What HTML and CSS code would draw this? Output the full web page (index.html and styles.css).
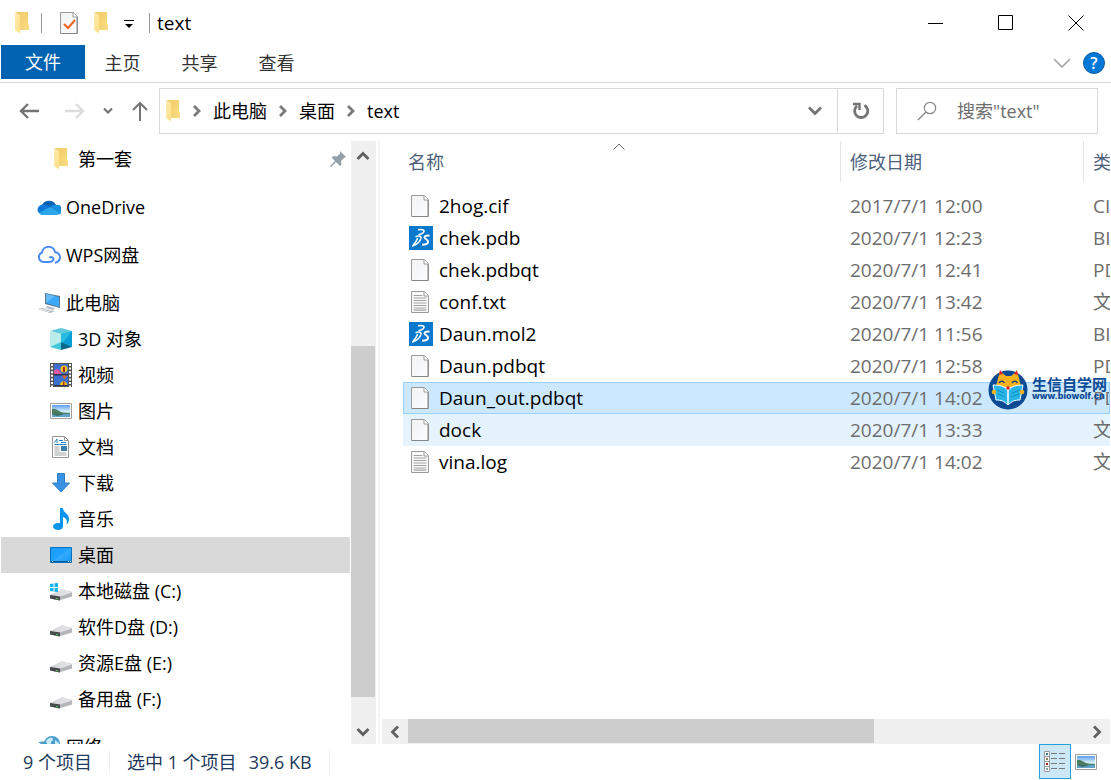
FILE: index.html
```html
<!DOCTYPE html>
<html lang="zh-CN">
<head>
    <meta charset="UTF-8">
    <meta name="viewport" content="width=device-width, initial-scale=1.0">
    <title>text</title>
    <link rel="stylesheet" href="styles.css">
</head>
<body>
    <!-- Shared icons -->
    <svg class="sprite" aria-hidden="true">
        <defs>
            <linearGradient id="folderFront" x1="0" y1="0" x2="1" y2="1">
                <stop offset="0" stop-color="#ffecb0"/>
                <stop offset="1" stop-color="#ffdf86"/>
            </linearGradient>
            <linearGradient id="folderBack" x1="0" y1="0" x2="1" y2="1">
                <stop offset="0" stop-color="#efc868"/>
                <stop offset="1" stop-color="#fbdc80"/>
            </linearGradient>
            <linearGradient id="sky" x1="0" y1="0" x2="0" y2="1">
                <stop offset="0" stop-color="#5b9bf5"/>
                <stop offset="0.5" stop-color="#cdeaf8"/>
                <stop offset="1" stop-color="#e4f3f7"/>
            </linearGradient>
            <linearGradient id="screen" x1="0" y1="0" x2="1" y2="1">
                <stop offset="0" stop-color="#1c9dfb"/>
                <stop offset="0.5" stop-color="#1fa2ff"/>
                <stop offset="0.5" stop-color="#35adff"/>
                <stop offset="1" stop-color="#1596f5"/>
            </linearGradient>
            <linearGradient id="diskTop" x1="0" y1="0" x2="1" y2="0">
                <stop offset="0" stop-color="#d2d3d5"/>
                <stop offset="1" stop-color="#e9e9eb"/>
            </linearGradient>
            <linearGradient id="paper" x1="0" y1="0" x2="1" y2="1">
                <stop offset="0" stop-color="#f1f3f4"/>
                <stop offset="1" stop-color="#fbfcfd"/>
            </linearGradient>
        </defs>
        <symbol id="folder" viewBox="0 0 16 22">
            <path d="M2 0H14V12l1 1v5H5L1 16z" fill="url(#folderBack)"/>
            <path d="M1 0l5 3v18.500L1 18z" fill="url(#folderFront)"/>
        </symbol>
        <symbol id="file" viewBox="0 0 18 22">
            <path d="M.5.500h13l4 4v17H.5z" fill="url(#paper)" stroke="#9a9a9a"/>
            <path d="M13 .5v4.500h4.500" fill="#fff" stroke="#9a9a9a"/>
            <path d="M17 5v16.500H1" fill="none" stroke="#868686"/>
        </symbol>
        <symbol id="textfile" viewBox="0 0 18 22">
            <path d="M.5.500h13l4 4v17H.5z" fill="#fafafa" stroke="#9a9a9a"/>
            <path d="M13 .5v4.500h4.500" fill="#fff" stroke="#9a9a9a"/>
            <path d="M2.500 4.500h9M2.500 7h13M2.500 9.500h13M2.500 12h13M2.500 14.500h13M2.500 17h13M2.500 19.200h13" stroke="#a2a2a2" stroke-width="1.200"/>
        </symbol>
        <symbol id="ds" viewBox="0 0 24 24">
            <path d="M0 0h24v24H0z" fill="#0a78cc"/>
            <g fill="none" stroke="#fff" stroke-width="1.500" stroke-linejoin="round">
                <path d="M9 3.800c3.500-.6 6.500-.2 6 1.500-.5 1.600-3 2.900-5.500 3.500"/>
                <path d="M6.500 10.800c3.500-1.200 6-.9 5.500 1.400-.6 3-4 6.500-8.300 7.800 1.800-2.300 3.800-4.500 5-8"/>
                <path d="M20.500 9.600c-3-.3-5.300.5-5 2 .3 1.400 4 2.200 3.700 4.300-.2 1.800-3.200 2.800-6.200 2.800" stroke-width="1.900"/>
            </g>
        </symbol>
        <symbol id="picture" viewBox="0 0 22 16">
            <path d="M.5.500h21v15H.5z" fill="#fff" stroke="#a0a0a0"/>
            <path d="M2 2h18v12H2z" fill="url(#sky)"/>
            <path d="M2 6c4-1 6 2 9 3s6 .5 9 1v1H2z" fill="#4b7d62"/>
            <path d="M2 11h18v3H2z" fill="#5fa1c9"/>
            <path d="M2 11c5-.5 9 0 12 .3L7 13z" fill="#3d6d62"/>
        </symbol>
        <symbol id="disk" viewBox="0 0 22 12">
            <path d="M0 6.500L12 .5 22 3v4.500L9 11.500 0 9.500z" fill="#b3b5b8"/>
            <path d="M0 6L12 0l10 3.500L10 7.500z" fill="url(#diskTop)"/>
            <path d="M0 6l10 1.500v4L0 9.500z" fill="#474b4c"/>
            <path d="M6 9l2 .3v1L6 10z" fill="#3fd154"/>
        </symbol>
        <symbol id="chev" viewBox="0 0 10 12">
            <path d="M2 1l5 5-5 5" fill="none" stroke="#7a7a7a" stroke-width="2.800"/>
        </symbol>
    </svg>

    <div class="window">
        <header class="titlebar">
            <svg class="folder"><use href="#folder"/></svg>
            <span class="divider"></span>
            <button class="quick" aria-label="属性">
                <svg width="18" height="22" viewBox="0 0 18 22"><use href="#file"/><path d="M4 12l4 4 7-8" fill="none" stroke="#f0641e" stroke-width="2"/></svg>
            </button>
            <button class="quick" aria-label="新建文件夹"><svg class="folder"><use href="#folder"/></svg></button>
            <button class="quick" aria-label="自定义快速访问工具栏">
                <svg width="10" height="10" viewBox="0 0 10 10"><path d="M0 2h10v1H0zM1 6h8l-4 4z"/></svg>
            </button>
            <span class="divider"></span>
            <h1>text</h1>
            <div class="controls">
                <button aria-label="最小化"><svg width="16" height="16"><path d="M0 8.500h15" stroke="#000"/></svg></button>
                <button aria-label="最大化"><svg width="16" height="16"><path d="M.5.500h14v14H.5z" fill="none" stroke="#000"/></svg></button>
                <button aria-label="关闭"><svg width="16" height="16"><path d="M.5.500l15 15M15.500.5l-15 15" stroke="#000"/></svg></button>
            </div>
        </header>

        <nav class="tabs" aria-label="功能区">
            <button class="tab tab-file">文件</button>
            <button class="tab">主页</button>
            <button class="tab">共享</button>
            <button class="tab">查看</button>
            <div class="tabs-right">
                <button aria-label="展开功能区"><svg width="18" height="10"><path d="M1 1l8 8 8-8" fill="none" stroke="#a3a3a3" stroke-width="1.600"/></svg></button>
                <button class="help" aria-label="帮助">?</button>
            </div>
        </nav>

        <div class="toolbar">
            <div class="history">
                <button aria-label="后退"><svg width="20" height="18"><path d="M20 9H2M9 2L2 9l7 7" fill="none" stroke="#757575" stroke-width="2.400"/></svg></button>
                <button aria-label="前进"><svg width="20" height="18"><path d="M0 9h18M11 2l7 7-7 7" fill="none" stroke="#dcdcdc" stroke-width="2.400"/></svg></button>
                <button aria-label="最近位置"><svg width="10" height="8"><path d="M1 1.500l4 4 4-4" fill="none" stroke="#757575" stroke-width="2.200"/></svg></button>
                <button aria-label="向上"><svg width="18" height="20"><path d="M9 20V2M2 9l7-7 7 7" fill="none" stroke="#757575" stroke-width="2"/></svg></button>
            </div>
            <div class="address">
                <svg class="folder"><use href="#folder"/></svg>
                <svg class="chev"><use href="#chev"/></svg>
                <button>此电脑</button>
                <svg class="chev"><use href="#chev"/></svg>
                <button>桌面</button>
                <svg class="chev"><use href="#chev"/></svg>
                <button>text</button>
                <button class="drop" aria-label="以前的位置"><svg width="14" height="10"><path d="M1 1.500l6 6 6-6" fill="none" stroke="#757575" stroke-width="2.800"/></svg></button>
                <button class="refresh" aria-label="刷新">
                    <svg width="18" height="18"><path d="M12.500 3.200A6.600 6.600 0 1 1 5 3.800" fill="none" stroke="#757575" stroke-width="2.800"/><path d="M1 2h6.500v6" fill="none" stroke="#757575" stroke-width="2.400"/></svg>
                </button>
            </div>
            <label class="search">
                <svg width="20" height="20"><circle cx="13" cy="7" r="5.700" fill="none" stroke="#8a8a8a" stroke-width="1.200"/><path d="M9 11l-8 8" stroke="#8a8a8a" stroke-width="1.400"/></svg>
                <input type="search" placeholder="搜索&quot;text&quot;" aria-label="搜索">
            </label>
        </div>

        <main>
            <nav class="tree" aria-label="导航窗格">
                <ul>
                    <li>
                        <a href="#" class="sub"><svg class="folder"><use href="#folder"/></svg>第一套
                            <svg class="pin" width="16" height="16"><path d="M10 0l6 6-2 1-3 3 .5 4-1.500 1-4-4-5 5-1-1 5-5-3-3 1-2 4 .5 3-3z" fill="#949fa8"/></svg>
                        </a>
                    </li>
                    <li class="group">
                        <a href="#">
                            <svg width="24" height="16"><path d="M5 6a8 8 0 0 1 14 0l-6 5z" fill="#0a62b8"/><path d="M1 13A5.500 5.500 0 0 1 5 5.500c3-.5 5 .5 8 3L5 16z" fill="#0f7ad6"/><path d="M13 8c2-2 4-2.500 6-2a5 5 0 0 1 3 9.500z" fill="#1590df"/><path d="M2 14l11-6 9.500 6c-.5 1.500-2 2-3 2H5c-1 0-2-.7-3-2z" fill="#29a7ea"/></svg>OneDrive
                        </a>
                    </li>
                    <li class="group">
                        <a href="#">
                            <svg width="24" height="18"><path d="M13 16H6a5 5 0 0 1-1-9.500A6.600 6.600 0 0 1 18 6c3 .5 5 3 5 5.500S20.500 16 18 17M13 16c2-.5 3.500-1 3.500-3s-3-2.500-4-1" fill="none" stroke="#4b8af5" stroke-width="2"/></svg>WPS网盘
                        </a>
                    </li>
                    <li class="group">
                        <a href="#">
                            <svg width="24" height="22"><path d="M8 1l15 3v12L8 12z" fill="#5b7486"/><path d="M9 2l13 3v10L9 11z" fill="#3aa9f7"/><path d="M9 2l9 2-9 7z" fill="#65bdf8"/><path d="M10 14l8 2-2 2-7-2z" fill="#b4bec7"/><path d="M1 17l5-1 12 3-5 2z" fill="#a9adb3"/><path d="M3 17l10 3M6 16.500l10 2.500" stroke="#eee"/></svg>此电脑
                        </a>
                    </li>
                    <li>
                        <a href="#" class="sub"><svg width="22" height="22"><path d="M0 3l11-3 11 3-11 3z" fill="#5fcadb"/><path d="M0 3l11 3v11L0 19z" fill="#b9ecea"/><path d="M22 3L11 6v11l11 2z" fill="#0b9fd8"/><path d="M11 6v11l11-14z" fill="#27bcdf"/><path d="M0 19l11-5v8z" fill="#44c9da"/><path d="M22 19l-11-5v8z" fill="#086a8b"/></svg>3D 对象</a>
                    </li>
                    <li>
                        <a href="#" class="sub"><svg width="22" height="24"><path d="M0 0h22v24H0z" fill="#555"/><path d="M4 1h14v22H4z" fill="#3b6fd0"/><path d="M4 7l4-1 4 5H4z" fill="#e05aa6"/><circle cx="14" cy="6" r="3.500" fill="#f3c518"/><path d="M13 4h2v5h-2z" fill="#b02b24"/><path d="M4 11h14v1.500H4zM4 22h14v1H4z" fill="#28324a"/><path d="M12 12.500h5l-2.500 4z" fill="#e0601c"/><path d="M10 22c0-5 7-5 7 0z" fill="#f3c518"/><path d="M13 18.500h1.500V22H13z" fill="#b02b24"/><path d="M2 1v23M20 1v23" stroke="#fff" stroke-width="2" stroke-dasharray="2 1.600"/></svg>视频</a>
                    </li>
                    <li><a href="#" class="sub"><svg width="22" height="16"><use href="#picture"/></svg>图片</a></li>
                    <li>
                        <a href="#" class="sub"><svg width="22" height="22"><path d="M2.500.500h12l4 4v17h-16z" fill="#fff" stroke="#969696"/><path d="M14.500.500v4h4" fill="none" stroke="#969696"/><path d="M4.500 6.500L7 3v4M9 4.500h4M11 6.500h5M4.500 8.500h12" stroke="#1d82c8" fill="none"/><path d="M4.500 11h5M4.500 13h5M4.500 15h5M4.500 17h12M4.500 19h12" stroke="#a5a5a5"/><path d="M11 10h6v5h-6z" fill="#3b7fa8"/></svg>文档</a>
                    </li>
                    <li>
                        <a href="#" class="sub"><svg width="22" height="20"><path d="M7.500.500h7V10h5L11 19l-8.500-9h5z" fill="#3b93e4" stroke="#2b7cc9"/></svg>下载</a>
                    </li>
                    <li>
                        <a href="#" class="sub"><svg width="22" height="22"><ellipse cx="8" cy="18.500" rx="5" ry="3.500" fill="#0b94ee"/><path d="M10 0h3c0 5 6 5 6 11 0 3-1 4-2.500 5.500 1-4 0-6-3.500-7.500v9.500h-3z" fill="#0b94ee"/></svg>音乐</a>
                    </li>
                    <li>
                        <a href="#" class="sub current"><svg width="22" height="16"><path d="M.5.500h21v15H.5z" fill="url(#screen)" stroke="#0871bd"/><path d="M1 14.500h20" stroke="#0b5f9f"/><path d="M2 14.500h1M18 14.500h1M20 14.500h1" stroke="#fff"/></svg>桌面</a>
                    </li>
                    <li>
                        <a href="#" class="sub"><svg class="disk"><use href="#disk" y="8" width="22" height="12"/><path d="M0 3l3.500-.5V6H0zM4.500 2.300L8 2v4H4.500zM0 7h3.500v3.500L0 10zM4.500 7H8v4l-3.500-.3z" fill="#12b5ef"/></svg>本地磁盘 (C:)</a>
                    </li>
                    <li><a href="#" class="sub"><svg class="disk"><use href="#disk" y="8" width="22" height="12"/></svg>软件D盘 (D:)</a></li>
                    <li><a href="#" class="sub"><svg class="disk"><use href="#disk" y="8" width="22" height="12"/></svg>资源E盘 (E:)</a></li>
                    <li><a href="#" class="sub"><svg class="disk"><use href="#disk" y="8" width="22" height="12"/></svg>备用盘 (F:)</a></li>
                    <li class="group">
                        <a href="#"><svg width="24" height="22"><path d="M1 6l9-1v7z" fill="#4e9cc4"/><circle cx="15" cy="8" r="8" fill="#4b9fce"/><path d="M9 5c3-4 6-4 7-2s-3 2-2 5-4 2-5-3zM18 4l4 3v4l-4-3z" fill="#cdebf5"/></svg>网络</a>
                    </li>
                </ul>
            </nav>
            <div class="scroll-y">
                <button aria-label="向上滚动"><svg width="14" height="10"><path d="M1.500 8L7 2.500 12.500 8" fill="none" stroke="#606060" stroke-width="2.800"/></svg></button>
                <span class="thumb"></span>
                <button aria-label="向下滚动"><svg width="14" height="10"><path d="M1.500 2L7 7.500 12.500 2" fill="none" stroke="#606060" stroke-width="2.800"/></svg></button>
            </div>

            <section class="content">
                <div class="list">
                    <table>
                        <colgroup><col class="col-name"><col class="col-date"><col></colgroup>
                        <thead>
                            <tr>
                                <th><span>名称</span><svg class="sort" width="12" height="7"><path d="M.5 6.500L6 1l5.500 5.500" fill="none" stroke="#6a6a6a"/></svg></th>
                                <th><span>修改日期</span></th>
                                <th><span>类型</span></th>
                            </tr>
                        </thead>
                        <tbody>
                            <tr><td><svg class="icon"><use href="#file" x="2" y="1" width="18" height="22"/></svg>2hog.cif</td><td>2017/7/1 12:00</td><td>CIF 文件</td></tr>
                            <tr><td><svg class="icon"><use href="#ds"/></svg>chek.pdb</td><td>2020/7/1 12:23</td><td>BIOVIA 文件</td></tr>
                            <tr><td><svg class="icon"><use href="#file" x="2" y="1" width="18" height="22"/></svg>chek.pdbqt</td><td>2020/7/1 12:41</td><td>PDBQT 文件</td></tr>
                            <tr><td><svg class="icon"><use href="#textfile" x="2" y="1" width="18" height="22"/></svg>conf.txt</td><td>2020/7/1 13:42</td><td>文本文档</td></tr>
                            <tr><td><svg class="icon"><use href="#ds"/></svg>Daun.mol2</td><td>2020/7/1 11:56</td><td>BIOVIA 文件</td></tr>
                            <tr><td><svg class="icon"><use href="#file" x="2" y="1" width="18" height="22"/></svg>Daun.pdbqt</td><td>2020/7/1 12:58</td><td>PDBQT 文件</td></tr>
                            <tr class="selected"><td><svg class="icon"><use href="#file" x="2" y="1" width="18" height="22"/></svg>Daun_out.pdbqt</td><td>2020/7/1 14:02</td><td>PDBQT 文件</td></tr>
                            <tr class="hover"><td><svg class="icon"><use href="#file" x="2" y="1" width="18" height="22"/></svg>dock</td><td>2020/7/1 13:33</td><td>文件</td></tr>
                            <tr><td><svg class="icon"><use href="#textfile" x="2" y="1" width="18" height="22"/></svg>vina.log</td><td>2020/7/1 14:02</td><td>文本文档</td></tr>
                        </tbody>
                    </table>
                    <div class="watermark">
                        <svg width="40" height="42" viewBox="0 0 40 42">
                            <circle cx="20" cy="22" r="19.500" fill="#0b4a94"/>
                            <path d="M8 18L12 3l6 5h5l6-5 4 15-12 8z" fill="#f6b21c"/>
                            <path d="M11 7l1-5 3 4zM26 6l3-4 1 5z" fill="#d8232a"/>
                            <path d="M11 15c1.500-2.500 4-2.500 5.500 0M24 15c1.500-2.500 4-2.500 5.500 0" fill="none" stroke="#0b3d78" stroke-width="1.300"/>
                            <path d="M5 17c6 0 11 1 15 5 4-4 9-5 15-5l-3 15c-5 0-8 1-12 5-4-4-7-5-12-5z" fill="#27b5e8" stroke="#fff"/>
                            <path d="M20 22v15" stroke="#fff" stroke-width="1.500"/>
                            <path d="M9 22l7 3M10 26l7 3M32 22l-8 3M31 26l-8 3" stroke="#148cc0"/>
                            <path d="M16 19h8l-4 4z" fill="#fff"/>
                            <circle cx="20" cy="20" r="1.800" fill="#d8232a"/>
                            <circle cx="6" cy="24" r="2.300" fill="#f6b21c"/><circle cx="34" cy="24" r="2.300" fill="#f6b21c"/>
                        </svg>
                        <p><strong>生信自学网</strong><span>www.biowolf.cn</span></p>
                    </div>
                </div>
                <div class="scroll-x">
                    <button aria-label="向左滚动"><svg width="10" height="14"><path d="M8 1.500L2.500 7 8 12.500" fill="none" stroke="#606060" stroke-width="2.800"/></svg></button>
                    <span class="thumb"></span>
                    <button aria-label="向右滚动"><svg width="10" height="14"><path d="M2 1.500L7.500 7 2 12.500" fill="none" stroke="#606060" stroke-width="2.800"/></svg></button>
                </div>
            </section>
        </main>

        <footer class="status">
            <span class="cell">9 个项目</span>
            <span class="cell"><span>选中 1 个项目</span><span>39.6 KB</span></span>
            <div class="views">
                <button class="active" aria-label="详细信息">
                    <svg width="22" height="22"><path d="M.5.500h5v20h-5zM.5 5.500h5M.5 10.500h5M.5 15.500h5" fill="#fff" stroke="#999"/><path d="M2 3h2" stroke="#3478a8" stroke-width="2"/><path d="M2 8h2" stroke="#8a7a45" stroke-width="2"/><path d="M2 13h2" stroke="#a2201c" stroke-width="2"/><path d="M2 18h2" stroke="#7ea3a0" stroke-width="2"/><path d="M7 2.500h6M15 2.500h6M7 7.500h6M15 7.500h6M7 12.500h6M15 12.500h6M7 17.500h6M15 17.500h6" stroke="#777"/></svg>
                </button>
                <button aria-label="大缩略图"><svg width="22" height="16"><use href="#picture"/></svg></button>
            </div>
        </footer>
    </div>
</body>
</html>
```

FILE: styles.css
```css
* {
    margin: 0;
    padding: 0;
    box-sizing: border-box;
}

body {
    font-family: "Open Sans", "Noto Sans CJK SC", sans-serif;
    font-size: 18px;
    line-height: 24px;
    color: #000;
    background-color: #fff;
}

button {
    display: flex;
    align-items: center;
    justify-content: center;
    border: none;
    background: none;
    font: inherit;
    color: inherit;
}

svg {
    flex: none;
    display: block;
}

.sprite {
    position: absolute;
    width: 0;
    height: 0;
}

.folder {
    width: 16px;
    height: 22px;
}

.window {
    display: flex;
    flex-direction: column;
    height: 100vh;
    overflow: hidden;
}

/* Title bar */
.titlebar {
    display: flex;
    align-items: center;
    gap: 15px;
    height: 45px;
    padding-left: 14px;
}

.titlebar .divider {
    width: 1px;
    height: 20px;
    margin-right: 3px;
    margin-left: -4px;
    background-color: #999;
}

.titlebar .quick + .divider {
    margin-left: 0;
}

.titlebar h1 {
    margin-left: -11px;
    font-size: 19px;
    font-weight: normal;
}

.controls {
    display: flex;
    align-self: stretch;
    margin-left: auto;
}

.controls button {
    width: 70px;
}

/* Ribbon tabs */
.tabs {
    display: flex;
    height: 38px;
    border-bottom: 1px solid #d9d9d9;
}

.tab {
    width: 77px;
    height: 36px;
    color: #333;
}

.tab-file {
    width: 84px;
    height: 34px;
    margin-left: 1px;
    margin-right: -1px;
    background-color: #0063b1;
    color: #fff;
}

.tabs-right {
    display: flex;
    align-items: center;
    gap: 12px;
    height: 36px;
    margin-left: auto;
    padding-right: 6px;
}

.help {
    width: 22px;
    height: 22px;
    border: 1px solid #0a5ba3;
    border-radius: 50%;
    background-color: #0078d7;
    color: #fff;
    font-size: 16px;
    font-weight: 600;
}

/* Address bar */
.toolbar {
    display: flex;
    gap: 12px;
    height: 58px;
    padding: 5px 13px 7px 19px;
}

.history {
    display: flex;
    align-items: center;
    gap: 18px;
    margin-right: -2px;
}

.history button:first-child {
    margin-right: 8px;
}

.address {
    display: flex;
    flex: 1;
    align-items: center;
    gap: 11px;
    padding-left: 5px;
    border: 1px solid #d9d9d9;
}

.chev {
    width: 10px;
    height: 12px;
}

.address .drop {
    width: 44px;
    margin-left: auto;
}

.address .refresh {
    align-self: stretch;
    width: 46px;
    margin-left: -11px;
    border-left: 1px solid #d9d9d9;
}

.search {
    display: flex;
    align-items: center;
    gap: 20px;
    width: 202px;
    padding-left: 20px;
    border: 1px solid #d9d9d9;
}

.search input {
    width: 120px;
    border: none;
    outline: none;
    font: inherit;
}

.search input::placeholder {
    color: #6d6d6d;
}

/* Body */
main {
    display: flex;
    flex: 1;
    min-height: 0;
}

.tree {
    width: 350px;
    padding-left: 1px;
    overflow: hidden;
}

.tree ul {
    list-style: none;
}

.tree a {
    display: flex;
    align-items: center;
    gap: 5px;
    height: 36px;
    padding-left: 36px;
    color: #000;
    text-decoration: none;
}

.tree a.sub {
    gap: 6px;
    padding-left: 49px;
}

.tree .sub .folder {
    width: 22px;
}

.tree .current {
    background-color: #d9d9d9;
}

.tree .group {
    margin-top: 12px;
}

.disk {
    width: 22px;
    height: 20px;
}

.pin {
    margin-right: 4px;
    margin-left: auto;
}

.scroll-y {
    display: flex;
    flex-direction: column;
    width: 25px;
    margin-left: 1px;
    background-color: #f0f0f0;
}

.scroll-y button {
    height: 25px;
    padding-right: 1px;
}

.scroll-y button:first-child {
    height: 30px;
}

.scroll-y .thumb {
    height: 351px;
    margin-top: auto;
    margin-right: 1px;
    margin-bottom: 22px;
    background-color: #cdcdcd;
}

.content {
    display: flex;
    flex: 1;
    flex-direction: column;
    min-width: 0;
    margin: 0 1px 0 2px;
    border-left: 2px solid #f5f5f5;
}

/* File list */
.list {
    position: relative;
    flex: 1;
    padding-left: 23px;
    overflow: hidden;
}

table {
    width: 100%;
    border-collapse: collapse;
    table-layout: fixed;
    font-size: 19px;
}

.col-name {
    width: 437px;
}

.col-date {
    width: 243px;
}

th {
    position: relative;
    height: 49px;
    color: #4c607a;
    font-size: 18px;
    font-weight: normal;
    text-align: left;
    vertical-align: top;
}

th span {
    display: block;
    height: 41px;
    padding: 9px 5px;
    overflow: hidden;
}

th + th span {
    border-left: 1px solid #e5e5e5;
    padding-left: 9px;
    white-space: nowrap;
}

.sort {
    position: absolute;
    top: 2px;
    left: 210px;
}

td {
    height: 32px;
    padding-left: 10px;
    overflow: hidden;
    color: #6d6d6d;
    white-space: nowrap;
}

td:first-child {
    display: flex;
    align-items: center;
    gap: 6px;
    padding-left: 6px;
    color: #000;
}

.icon {
    width: 24px;
    height: 24px;
}

.selected {
    background-color: #cce8ff;
    outline: 1px solid #99d1ff;
    outline-offset: -1px;
}

.hover {
    background-color: #e5f3ff;
}

/* Logo over the list */
.watermark {
    position: absolute;
    top: 227px;
    right: 3px;
    display: flex;
    align-items: center;
    gap: 4px;
    color: #0b4a94;
}

.watermark strong,
.watermark span {
    display: block;
    font-size: 15px;
    line-height: 14px;
}

.watermark span {
    font-family: Inter, sans-serif;
    font-size: 9px;
    font-weight: 800;
    line-height: 10px;
}

.scroll-x {
    display: flex;
    height: 25px;
    margin-left: 2px;
    background-color: #f0f0f0;
}

.scroll-x button {
    width: 26px;
}

.scroll-x .thumb {
    width: 66%;
    max-width: 466px;
    margin-right: auto;
    margin-bottom: 1px;
    background-color: #cdcdcd;
}

/* Status bar */
.status {
    display: flex;
    align-items: center;
    height: 36px;
    padding-left: 23px;
    color: #1e395b;
}

.cell {
    display: flex;
    gap: 12px;
    height: 24px;
    margin-right: 17px;
    padding-right: 17px;
    border-right: 1px solid #f0f0f0;
}

.views {
    display: flex;
    align-self: stretch;
    gap: 4px;
    margin-left: auto;
    padding-right: 14px;
    padding-bottom: 1px;
}

.views .active {
    width: 32px;
    border: 1px solid #26a0da;
    background-color: #cce8f6;
}
```
